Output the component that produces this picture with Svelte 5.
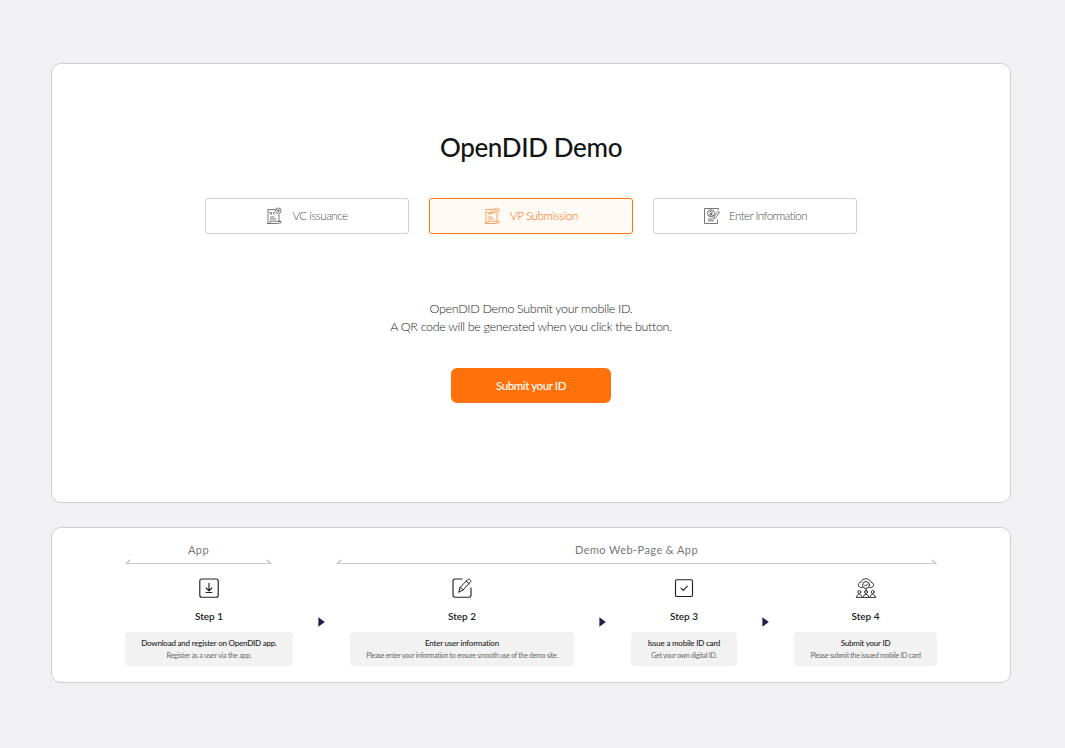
<script>
  const tabs = [
    { label: 'VC issuance', kind: 'vc', cls: 't-vc' },
    { label: 'VP Submission', kind: 'vp', cls: 't-vp', active: true },
    { label: 'Enter Information', kind: 'info', cls: 't-info' }
  ];
  const steps = [
    { title: 'Step 1', head: 'Download and register on OpenDID app.', text: 'Register as a user via the app.', icon: 'download' },
    { title: 'Step 2', head: 'Enter user information', text: 'Please enter your information to ensure smooth use of the demo site.', icon: 'edit' },
    { title: 'Step 3', head: 'Issue a mobile ID card', text: 'Get your own digital ID.', icon: 'check' },
    { title: 'Step 4', head: 'Submit your ID', text: 'Please submit the issued mobile ID card', icon: 'people' }
  ];
</script>

<main>
  <section class="card demo">
    <h1>OpenDID Demo</h1>
    <nav>
      {#each tabs as tab}
        <button class="tab {tab.cls}" class:active={tab.active}>
          <svg width="18" height="18" viewBox="0 0 18 18" fill="none" stroke="currentColor" stroke-width=".8">
            {#if tab.kind === 'info'}
              <path d="M15.500 3V1.500H1.500v15h13v-4" />
              <circle cx="8" cy="6.300" r="3.600" />
              <circle cx="8" cy="5.400" r="1.300" />
              <path d="M5.800 9c.3-2.200 4.100-2.200 4.400 0M8 6.500v3M5 12h5M5 13.800h6M10.700 11.700l.5-2.400 3.700-5 1.700 1.200-3.800 5-2.100 1.200Z" />
            {:else}
              <path d="M10 2.500H2v12.800c0 .8-.5 1.200-1 1.200h10.800c1 0 1.200-1 1.200-2V7M4 14.200h11c.2 1.600-.4 2.300-1.500 2.300M4 14.200v2M4 10h4.500M4 12h6" />
              <circle cx="12.400" cy="3.700" r="2.700" />
              <path d="M3.600 4.700 4.800 7.500 6 4.700" />
              {#if tab.kind === 'vc'}
                <path d="M9 5.200c-1.700-.9-2.400 2.500 0 2M12.400 2.200v3M10.900 3.700h3" />
              {:else}
                <path d="M7 7.700v-3h1c1.400 0 1.200 1.700 0 1.700H7" />
                <circle cx="12.400" cy="3.700" r=".8" />
              {/if}
            {/if}
          </svg>
          <span>{tab.label}</span>
        </button>
      {/each}
    </nav>
    <p class="intro">OpenDID Demo Submit your mobile ID.<br />A QR code will be generated when you click the button.</p>
    <button class="submit">Submit your ID</button>
  </section>

  <section class="card guide">
    <div class="groups">
      <div class="group app"><span>App</span></div>
      <div class="group web"><span>Demo Web-Page &amp; App</span></div>
    </div>
    <div class="steps">
      {#each steps as step, i}
        {#if i > 0}
          <svg class="arrow" width="7" height="10" viewBox="0 0 7 10"><path d="M.4.3 6.800 5 .4 9.700Z" fill="#211f4b" /></svg>
        {/if}
        <div class="step s{i + 1}">
          <svg width="22" height="22" viewBox="0 0 22 22" fill="none" stroke="#222" stroke-width="1.15" stroke-linecap="round" stroke-linejoin="round">
            {#if step.icon === 'download'}
              <rect x="1.800" y="2" width="18.400" height="18.200" rx="2" />
              <path d="M11 6.300v7.400M8.100 11l2.900 2.800 2.900-2.800M8 15.500h6" />
            {:else if step.icon === 'edit'}
              <path d="M11 2H4.200C2.800 2 2 2.800 2 4.200v13.800c0 1.400.8 2.200 2.200 2.200h13.600c1.400 0 2.200-.8 2.200-2.200V11" />
              <path d="m8 15 .9-4.300 7.600-8c1.800-1.500 4.100.6 2.900 2.400l-7.600 8.100L8 15ZM15.200 4.100l2.800 2.600M8.900 10.800c1.500 0 2.700 1 2.900 2.400" stroke-width="1" />
            {:else if step.icon === 'check'}
              <rect x="2.500" y="2.700" width="17" height="16.800" rx="1.600" />
              <path d="m8 11.200 2.300 2.100 4-4.200" />
            {:else}
              <g stroke-width=".9">
                <path d="M7.200 10.700C2.800 11.300 2 6.300 5.700 5.300 7 .7 14.400.5 16 5.200c4 .8 3.300 5.800-1.200 5.500" />
                <circle cx="11" cy="8" r="3.500" />
                <path d="m9.500 8 1.100 1.100 2-2.100M11 11.500V14" />
                <circle cx="4.300" cy="15" r="1.500" /><circle cx="11" cy="15" r="1.500" /><circle cx="17.700" cy="15" r="1.500" />
                <path d="M1.700 20.300c0-4.300 5.200-4.300 5.200 0M8.400 20.300c0-4.300 5.200-4.300 5.200 0M15.100 20.300c0-4.300 5.200-4.300 5.200 0M1.300 20.400h19.400" />
              </g>
            {/if}
          </svg>
          <h2>{step.title}</h2>
          <div class="note">
            <strong>{step.head}</strong>
            <small>{step.text}</small>
          </div>
        </div>
      {/each}
    </div>
  </section>
</main>

<style>
  :global(body) { margin: 0; background: #f1f1f4; }
  main {
    box-sizing: border-box;
    height: 748px;
    padding: 63px 54px 0 51px;
    display: flex;
    flex-direction: column;
    gap: 24px;
    font-family: Lato, "Liberation Sans", sans-serif;
  }
  .card {
    box-sizing: border-box;
    background: #fff;
    border: 1px solid #cfcfd1;
    border-radius: 10px;
    display: flex;
    flex-direction: column;
    align-items: center;
  }
  .demo { height: 440px; padding-top: 66px; }
  h1 { margin: 0; font-size: 26px; line-height: 34px; font-weight: 500; color: #151515; letter-spacing: -.35px; white-space: nowrap; }
  nav { display: flex; gap: 20px; margin-top: 34px; }
  button { font-family: inherit; box-sizing: border-box; padding: 0; }
  .tab {
    width: 204px;
    height: 36px;
    display: flex;
    align-items: center;
    justify-content: center;
    gap: 8px;
    background: #fff;
    border: 1px solid #d0d0d0;
    border-radius: 3px;
    color: #505050;
    font-size: 11.5px;
    line-height: 14px;
    font-weight: 300;
    letter-spacing: -.45px;
    white-space: nowrap;
  }
  .t-vp { letter-spacing: -.35px; }
  .t-info { letter-spacing: -.53px; }
  .tab svg { color: #555; }
  .tab.active { background: #fffbf4; border-color: #ff7410; color: #ff6600; }
  .tab.active svg { color: #ff8c40; }
  .intro { margin: 66px 0 0; font-size: 12.5px; line-height: 18px; font-weight: 300; color: #1c1c1c; letter-spacing: -.34px; text-align: center; white-space: nowrap; }
  .submit {
    width: 160px;
    height: 35px;
    margin-top: 32px;
    border: 0;
    border-radius: 6px;
    background: #ff710a;
    color: #fff;
    font-size: 11.5px;
    font-weight: 500;
    letter-spacing: -.4px;
  }
  .guide { height: 156px; padding-top: 14px; }
  .groups { width: 812px; display: flex; justify-content: space-between; }
  .group {
    position: relative;
    box-sizing: border-box;
    height: 22px;
    border-bottom: 1px solid #cbcbcd;
    text-align: center;
    font-size: 11px;
    line-height: 15px;
    color: #777;
    letter-spacing: .42px;
  }
  .app { width: 147px; }
  .web { width: 601px; }
  .group::before, .group::after {
    content: '';
    position: absolute;
    bottom: 0;
    width: 6px;
    height: 2px;
    background: #cfcfd4;
  }
  .group::before { left: 0; transform: rotate(-45deg); }
  .group::after { right: 0; transform: rotate(45deg); }
  .steps { width: 812px; display: flex; justify-content: space-between; margin-top: 13px; }
  .arrow { margin-top: 40px; }
  .step { display: flex; flex-direction: column; align-items: center; }
  .s1 { width: 168px; }
  .s2 { width: 224px; }
  .s3 { width: 106px; }
  .s4 { width: 143px; }
  h2 { margin: 10px 0 9px; font-size: 10px; line-height: 14px; font-weight: 600; color: #222; letter-spacing: -.03px; }
  .note {
    box-sizing: border-box;
    width: 100%;
    height: 34px;
    padding-top: 5px;
    background: #f2f2f2;
    border-radius: 4px;
    display: flex;
    flex-direction: column;
    align-items: center;
    white-space: nowrap;
  }
  strong { font-size: 8px; line-height: 12px; font-weight: 500; color: #222; letter-spacing: -.22px; }
  small { font-size: 7px; line-height: 12px; color: #666; letter-spacing: -.3px; }
  .s1 small { letter-spacing: -.17px; }
</style>
